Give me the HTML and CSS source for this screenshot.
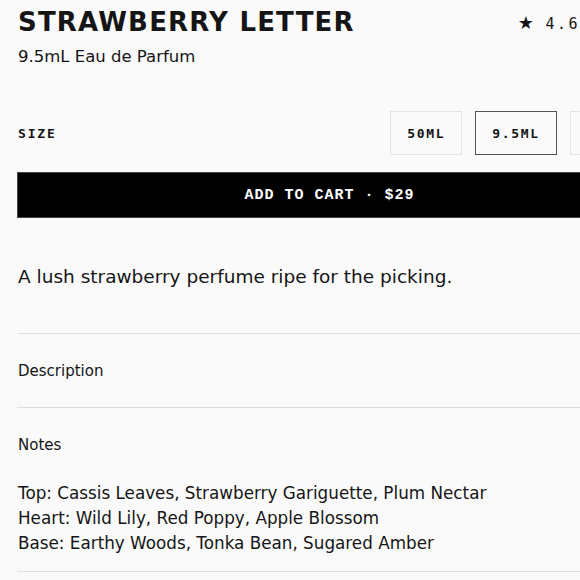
FILE: index.html
```html
<!DOCTYPE html>
<html>
<head>
<meta charset="utf-8">
<link rel="stylesheet" href="styles.css">
</head>
<body>
<main class="product">
  <header class="head">
    <h1 class="title">STRAWBERRY LETTER</h1>
    <div class="rating"><span class="star">★</span> 4.6</div>
  </header>
  <p class="variant">9.5mL Eau de Parfum</p>
  <div class="size-row">
    <span class="size-label">SIZE</span>
    <div class="sizes">
      <button class="size">50ML</button>
      <button class="size selected">9.5ML</button>
      <button class="size">30ML</button>
    </div>
  </div>
  <button class="cart">ADD TO CART · $29</button>
  <p class="tagline">A lush strawberry perfume ripe for the picking.</p>
  <section class="acc">
    <div class="acc-title">Description</div>
  </section>
  <section class="acc">
    <div class="acc-title">Notes</div>
    <div class="notes">
      <div>Top: Cassis Leaves, Strawberry Gariguette, Plum Nectar</div>
      <div>Heart: Wild Lily, Red Poppy, Apple Blossom</div>
      <div>Base: Earthy Woods, Tonka Bean, Sugared Amber</div>
    </div>
  </section>
</main>
</body>
</html>
```
FILE: styles.css
```css
html, body {
  margin: 0;
  padding: 0;
  background: #fafafa;
  overflow: hidden;
}
body {
  font-family: "DejaVu Sans", sans-serif;
  color: #151515;
}
.product {
  width: 625px;
  padding-left: 17px;
}
.head {
  display: flex;
  justify-content: space-between;
  align-items: center;
  padding-top: 6px;
}
.title {
  margin: 0 0 0 1px;
  font-size: 26px;
  font-weight: bold;
  letter-spacing: 1.2px;
  line-height: 32px;
}
.rating {
  font-family: "DejaVu Sans Mono", monospace;
  font-size: 15px;
  letter-spacing: 2.5px;
  padding-right: 62px;
}
.star {
  font-family: "DejaVu Sans", sans-serif;
  font-size: 18px;
  letter-spacing: 0;
}
.variant {
  margin: 8px 0 0 1px;
  font-size: 16.5px;
  line-height: 22px;
}
.size-row {
  display: flex;
  justify-content: space-between;
  align-items: center;
  margin-top: 43px;
  padding-left: 1px;
}
.size-label {
  font-family: "DejaVu Sans Mono", monospace;
  font-size: 13px;
  font-weight: bold;
  letter-spacing: 1.8px;
}
.sizes {
  display: flex;
  gap: 13px;
}
.size {
  height: 44px;
  padding: 0 16px;
  background: #fafafa;
  border: 1px solid #e3e3e3;
  font-family: "DejaVu Sans Mono", monospace;
  font-size: 13px;
  font-weight: bold;
  letter-spacing: 1.7px;
  color: #151515;
}
.size.selected {
  border-color: #555;
}
.cart {
  display: block;
  width: 625px;
  height: 46px;
  margin-top: 17px;
  background: #000;
  color: #fff;
  border: 1px solid #444;
  font-family: "Liberation Mono", monospace;
  font-weight: bold;
  font-size: 15px;
  letter-spacing: 1px;
}
.tagline {
  margin: 46px 0 0 1px;
  font-size: 18.5px;
  line-height: 26px;
  padding-bottom: 43px;
  border-bottom: 1px solid #dedede;
}
.acc {
  border-bottom: 1px solid #dedede;
}
.acc-title {
  font-size: 15px;
  line-height: 20px;
  padding: 27px 0 26px 1px;
}
.notes {
  padding-left: 1px;
  font-size: 16.8px;
  line-height: 25px;
  padding-bottom: 15px;
}
```
